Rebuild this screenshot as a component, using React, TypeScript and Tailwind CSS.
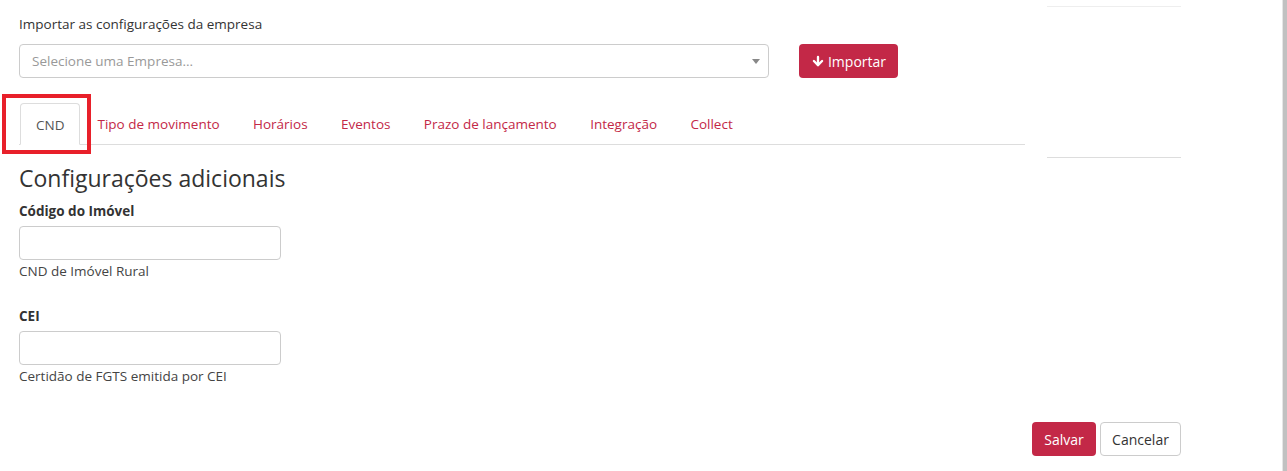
import { ArrowDown } from "lucide-react";

const tabs = ["CND", "Tipo de movimento", "Horários", "Eventos", "Prazo de lançamento", "Integração", "Collect"];

export default function App() {
  return (
    <div
      className="relative flex h-[471px] w-full overflow-hidden bg-white text-[13.5px] text-[#333]"
      style={{ fontFamily: '"Open Sans", "Noto Sans", Arial, sans-serif' }}
    >
      <div className="flex flex-1 pl-[19px]">
        <div className="flex w-[1162px] flex-col">
          <div className="flex">
            {/* coluna principal */}
            <div className="flex w-[1006px] flex-col">
              <div className="mt-[14px] leading-[20px]">Importar as configurações da empresa</div>
              <div className="mt-[10px] flex items-center">
                <div className="flex h-[34px] w-[750px] items-center justify-between rounded-[4px] border border-[#ccc] pl-[12px] pr-[8px]">
                  <span className="text-[#999]">Selecione uma Empresa...</span>
                  <span className="h-0 w-0 border-x-[4px] border-t-[5px] border-x-transparent border-t-[#888]" />
                </div>
                <button className="ml-[30px] flex h-[34px] w-[99px] items-center justify-center gap-[3px] rounded-[4px] bg-[#c32847] text-[14px] text-white">
                  <ArrowDown size={14} strokeWidth={4} />
                  Importar
                </button>
              </div>

              {/* abas */}
              <div className="mt-[25px] flex h-[42px] border-b border-[#ddd]">
                {tabs.map((tab, i) =>
                  i === 0 ? (
                    <div
                      key={tab}
                      className="-mb-px ml-px mr-[2px] flex items-center rounded-t-[4px] border border-b-white border-[#ddd] bg-white px-[15px] pt-[2px] text-[#555]"
                    >
                      {tab}
                    </div>
                  ) : (
                    <div key={tab} className="mr-[3.4px] flex items-center px-[15px] pt-[2px] text-[#c32847]">
                      {tab}
                    </div>
                  )
                )}
              </div>

              <h3 className="mt-[19px] text-[23px] leading-[28px] text-[#333]">Configurações adicionais</h3>

              <label className="mt-[9px] block font-bold leading-[20px]">Código do Imóvel</label>
              <input className="mt-[5px] h-[34px] w-[262px] rounded-[4px] border border-[#ccc] outline-none" />
              <div className="mt-[1px] leading-[20px] text-[#444]">CND de Imóvel Rural</div>

              <label className="mt-[25px] block font-bold leading-[20px]">CEI</label>
              <input className="mt-[5px] h-[34px] w-[262px] rounded-[4px] border border-[#ccc] outline-none" />
              <div className="mt-[1px] leading-[20px] text-[#444]">Certidão de FGTS emitida por CEI</div>
            </div>

            {/* coluna lateral */}
            <div className="ml-[22px] flex w-[134px] flex-col">
              <div className="mt-[6px] h-px bg-[#eee]" />
              <div className="mt-[150px] h-px bg-[#ddd]" />
            </div>
          </div>

          <div className="mt-auto mb-[15px] flex justify-end gap-[4px]">
            <button className="h-[34px] w-[64px] rounded-[4px] bg-[#c32847] text-[14px] text-white">Salvar</button>
            <button className="h-[34px] w-[81px] rounded-[4px] border border-[#ccc] bg-white text-[14px] text-[#333]">
              Cancelar
            </button>
          </div>
        </div>
      </div>

      {/* barra de rolagem */}
      <div className="flex w-[5px]">
        <div className="w-px bg-[#e6e6e6]" />
        <div className="flex-1 bg-[#c1c1c1]" />
      </div>

      {/* destaque vermelho */}
      <div className="absolute left-[2px] top-[94px] h-[60px] w-[89px] border-[4px] border-[#e8202a]" />
    </div>
  );
}
